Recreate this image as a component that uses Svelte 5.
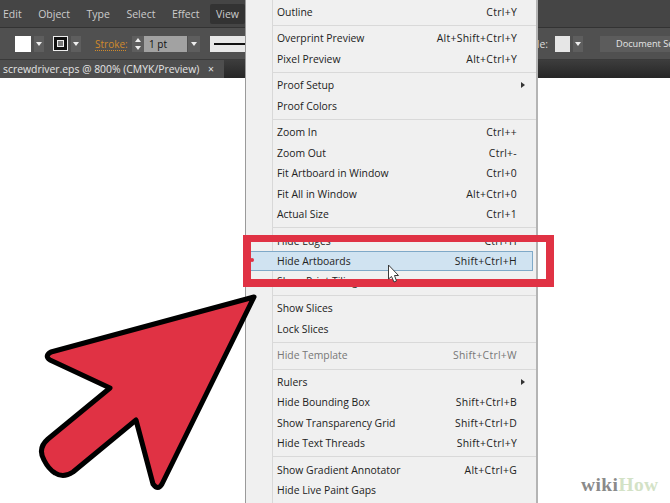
<script>
  const groups = [
    [{ t: 'Outline', k: 'Ctrl+Y' }],
    [{ t: 'Overprint Preview', k: 'Alt+Shift+Ctrl+Y' }, { t: 'Pixel Preview', k: 'Alt+Ctrl+Y' }],
    [{ t: 'Proof Setup', sub: true }, { t: 'Proof Colors' }],
    [{ t: 'Zoom In', k: 'Ctrl++' }, { t: 'Zoom Out', k: 'Ctrl+-' }, { t: 'Fit Artboard in Window', k: 'Ctrl+0' }, { t: 'Fit All in Window', k: 'Alt+Ctrl+0' }, { t: 'Actual Size', k: 'Ctrl+1' }],
    [{ t: 'Hide Edges', k: 'Ctrl+H' }, { t: 'Hide Artboards', k: 'Shift+Ctrl+H', hi: true }, { t: 'Show Print Tiling' }],
    [{ t: 'Show Slices' }, { t: 'Lock Slices' }],
    [{ t: 'Hide Template', k: 'Shift+Ctrl+W', dis: true }],
    [{ t: 'Rulers', sub: true }, { t: 'Hide Bounding Box', k: 'Shift+Ctrl+B' }, { t: 'Show Transparency Grid', k: 'Shift+Ctrl+D' }, { t: 'Hide Text Threads', k: 'Shift+Ctrl+Y' }],
    [{ t: 'Show Gradient Annotator', k: 'Alt+Ctrl+G' }, { t: 'Hide Live Paint Gaps' }]
  ];
  const menus = ['Edit', 'Object', 'Type', 'Select', 'Effect', 'View'];
</script>

<div class="page">
  <header class="menubar">
    {#each menus as m}
      <span class="top" class:active={m === 'View'}>{m}</span>
    {/each}
  </header>

  <div class="control">
    <span class="swatch first"></span>
    <span class="drop"><i></i></span>
    <span class="strokeicon"><b></b></span>
    <span class="drop"><i></i></span>
    <span class="strokelabel">Stroke:</span>
    <span class="spin"><i class="up"></i><i></i></span>
    <span class="field">1 pt</span>
    <span class="drop wide"><i></i></span>
    <span class="lineprev"><b></b></span>
    <span class="right">
      <span class="stylelabel">Style:</span>
      <span class="swatch grey"></span>
      <span class="drop"><i></i></span>
      <span class="docbtn">Document Setup</span>
    </span>
  </div>

  <div class="tabbar">
    <span class="tab">screwdriver.eps @ 800% (CMYK/Preview) <em>×</em></span>
  </div>

  <main class="canvas"></main>

  <nav class="menu">
    {#each groups as g, i}
      {#if i > 0}<div class="sep"></div>{/if}
      {#each g as r}
        <div class="row" class:hi={r.hi} class:dis={r.dis}>
          <span>{r.t}</span>
          {#if r.k}<span class="key">{r.k}</span>{/if}
          {#if r.sub}<i class="caret"></i>{/if}
        </div>
      {/each}
    {/each}
  </nav>

  <div class="redbox"></div>
  <span class="dot"></span>

  <svg class="cursor" width="14" height="20" viewBox="0 0 14 20">
    <path d="M1.5 1 V15 L4.5 12.5 L7 18 L9.5 17 L7.5 11.5 H11.5 Z" fill="#fff" stroke="#3a3a3a" stroke-width="1" />
  </svg>

  <svg class="arrow" width="280" height="223" viewBox="0 280 280 223">
    <path d="M254 297 L51 352 Q44 356 50 360 L110 388 L48 439 C40 446 40 453 44 460 C47 466 50 470 55 473 C61 477 67 476 73 472 L136 420 L153 484 Q158 491 162 484 Z" fill="#e03244" stroke="#000" stroke-width="5" stroke-linejoin="round" />
  </svg>

  <span class="logo">wiki<span>How</span></span>
</div>

<style>
  :global(body) { margin: 0; background: #fff; }
  .page {
    position: relative;
    width: 670px;
    height: 503px;
    overflow: hidden;
    display: flex;
    flex-direction: column;
    font-family: "Open Sans", "Noto Sans", sans-serif;
    font-size: 10.4px;
  }
  .menubar {
    height: 28px;
    flex: none;
    box-sizing: border-box;
    background: #454545;
    border-bottom: 1px solid #333;
    display: flex;
    align-items: center;
    color: #ccc;
    font-size: 10.5px;
    gap: 4.5px;
  }
  .top { padding: 0 6px; height: 20px; line-height: 20px; }
  .top:first-child { padding-left: 3px; }
  .top.active { background: #333; border-radius: 2px; }
  .control {
    height: 32px;
    flex: none;
    box-sizing: border-box;
    background: #505050;
    border-bottom: 1px solid #3a3a3a;
    display: flex;
    align-items: center;
    padding-left: 15px;
    color: #ddd;
  }
  .swatch { width: 16px; height: 16px; background: #fff; flex: none; }
  .swatch.grey { background: #e6e6e6; width: 15px; }
  .drop {
    width: 10px;
    height: 16px;
    margin-left: 3px;
    background: #5e5e5e;
    display: flex;
    align-items: center;
    justify-content: center;
    flex: none;
  }
  .drop i, .spin i {
    width: 0;
    height: 0;
    border-left: 3px solid transparent;
    border-right: 3px solid transparent;
    border-top: 4px solid #eee;
  }
  .drop.wide { width: 12px; margin-left: 1px; }
  .strokeicon {
    width: 15px;
    height: 15px;
    margin-left: 9px;
    box-sizing: border-box;
    border: 1px solid #eee;
    background: #111;
    display: flex;
    align-items: center;
    justify-content: center;
    flex: none;
  }
  .strokeicon b { width: 7px; height: 7px; box-sizing: border-box; background: #777; border: 1px solid #eee; }
  .strokelabel { color: #d08a2c; margin-left: 14px; width: 37px; font-size: 10px; text-decoration: underline dotted; text-underline-offset: 2px; }
  .spin {
    width: 12px;
    height: 16px;
    background: #5e5e5e;
    display: flex;
    flex-direction: column;
    align-items: center;
    justify-content: space-around;
    flex: none;
  }
  .spin i.up { border-top: 0; border-bottom: 4px solid #eee; }
  .field {
    width: 43px;
    height: 16px;
    line-height: 16px;
    box-sizing: border-box;
    padding-left: 5px;
    background: #a2a2a2;
    color: #111;
    font-size: 10px;
    flex: none;
  }
  .lineprev {
    width: 40px;
    height: 16px;
    margin-left: 10px;
    background: #e8e8e8;
    display: flex;
    align-items: center;
    flex: none;
  }
  .lineprev b { width: 100%; height: 2px; margin-left: 4px; background: #111; }
  .right { margin-left: auto; display: flex; align-items: center; width: 115px; flex: none; }
  .stylelabel { width: 38px; margin-right: 7px; margin-left: -45px; text-align: right; flex: none; }
  .docbtn {
    margin-left: 17px;
    width: 90px;
    height: 16px;
    line-height: 16px;
    padding-left: 16px;
    background: #5c5c5c;
    color: #e6e6e6;
    font-size: 9.2px;
    white-space: nowrap;
    flex: none;
  }
  .tabbar {
    height: 18px;
    flex: none;
    background: linear-gradient(#3d3d3d, #262626);
    display: flex;
  }
  .tab {
    width: 224px;
    box-sizing: border-box;
    padding-left: 3px;
    background: #4e4e4e;
    color: #e4e4e4;
    line-height: 18px;
    white-space: nowrap;
    overflow: hidden;
  }
  .tab em { font-style: normal; margin-left: 6px; }
  .canvas { flex: 1; background: #fff; }
  .menu {
    position: absolute;
    left: 245px;
    top: 0;
    width: 293px;
    height: 503px;
    box-sizing: border-box;
    padding: 1.6px 19px 0 31px;
    background: linear-gradient(to right, #f0f0f0 26px, #d8d8d8 26px, #d8d8d8 27px, #f0f0f0 27px);
    border-left: 1px solid #9a9a9a;
    border-right: 2px solid #b4b4b4;
    color: #222;
    overflow: hidden;
  }
  .row {
    position: relative;
    height: 20.4px;
    line-height: 20.4px;
    display: flex;
    justify-content: space-between;
    white-space: nowrap;
  }
  .key { letter-spacing: 0.3px; }
  .row.dis { color: #777; }
  .row.hi::before {
    content: "";
    position: absolute;
    left: -27px;
    right: -16px;
    top: 0;
    bottom: 0;
    background: #d0e3f1;
    border: 1px solid #7fa9c8;
  }
  .row.hi span { position: relative; }
  .caret {
    position: absolute;
    right: -8px;
    top: 7px;
    width: 0;
    height: 0;
    border-top: 3px solid transparent;
    border-bottom: 3px solid transparent;
    border-left: 4px solid #333;
  }
  .sep { height: 1px; margin: 3px -19px 2.3px -5px; background: #d9d9d9; }
  .redbox {
    position: absolute;
    left: 243px;
    top: 235px;
    width: 311px;
    height: 52px;
    box-sizing: border-box;
    border: 8px solid #e03244;
    border-top-width: 7px;
  }
  .dot { position: absolute; left: 250px; top: 258px; width: 4px; height: 4px; border-radius: 50%; background: #e03244; }
  .cursor { position: absolute; left: 387px; top: 264px; }
  .arrow { position: absolute; left: 0; top: 280px; }
  .logo {
    position: absolute;
    left: 581px;
    top: 474px;
    font-family: "Liberation Serif", serif;
    font-weight: bold;
    font-size: 19.5px;
    color: #8a8a8a;
    letter-spacing: 0.4px;
  }
  .logo span { color: #d3e2c6; }
</style>
